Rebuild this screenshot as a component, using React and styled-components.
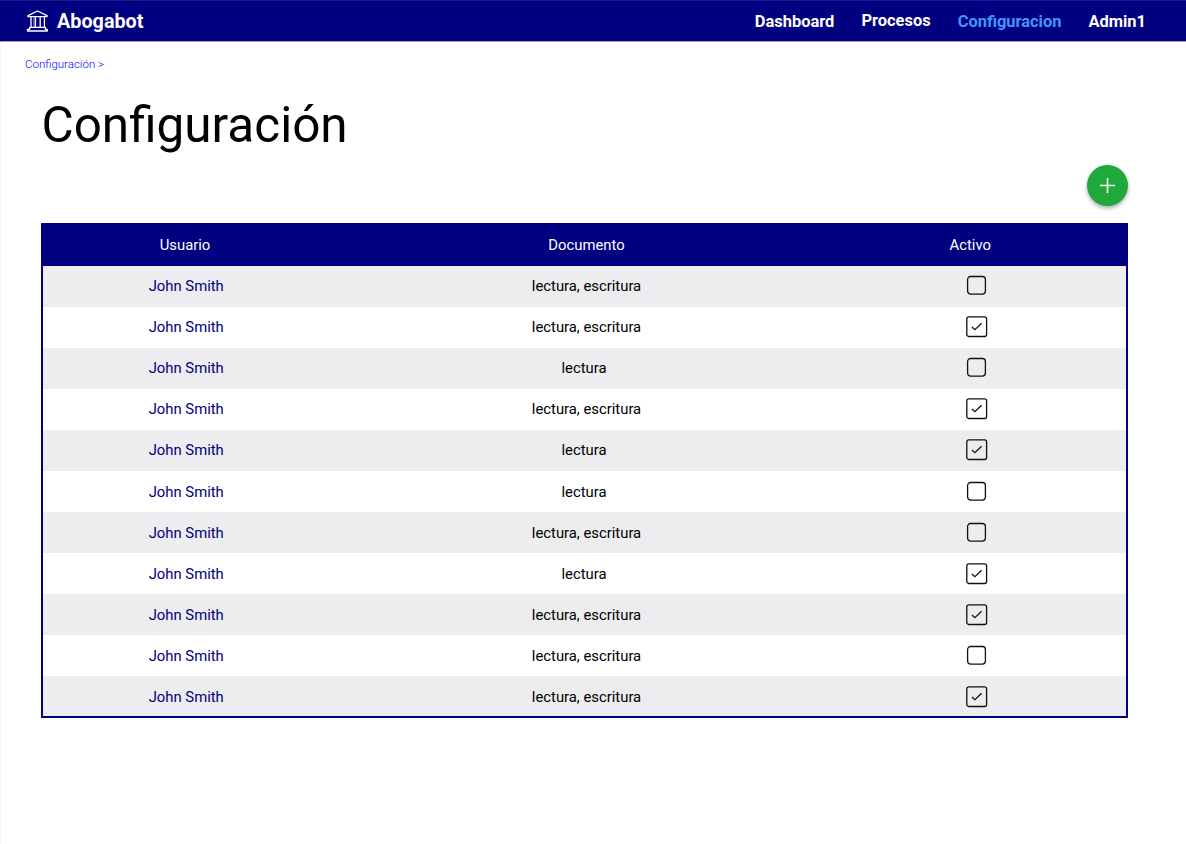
import React from "react";
import styled, { createGlobalStyle } from "styled-components";

const GlobalStyle = createGlobalStyle`
  *, *::before, *::after { box-sizing: border-box; }
  body { margin: 0; background: #fff; font-family: Roboto, "Liberation Sans", sans-serif; color: #000; }
`;

const Page = styled.div`
  min-height: 844px;
  border-left: 1px solid #f6f6f6;
`;

const Header = styled.header`
  display: flex;
  justify-content: space-between;
  height: 42px;
  margin-left: -1px;
  padding: 0 40px 0 26px;
  background: #000080;
  border-top: 1px solid #1a1a8c;
  border-bottom: 1px solid #a0a0d0;
  color: #fff;
`;

const Brand = styled.div`
  display: flex;
  align-items: center;
  gap: 8px;
  font-size: 19.8px;
  font-weight: 700;
`;

const Nav = styled.nav`
  display: flex;
  align-items: center;
  gap: 27px;
`;

const NavLink = styled.a`
  font-size: 16.45px;
  font-weight: 700;
  line-height: 20px;
  color: ${(p) => (p.$active ? "#4096ff" : "#fff")};
  padding: ${(p) => (p.$raised ? "0 0 1px" : "1px 0 0")};
`;

const Breadcrumb = styled.div`
  padding: 15px 0 0 24px;
  font-size: 11.5px;
  font-weight: 300;
  line-height: 14px;
  color: #0000ff;
`;

const Title = styled.h1`
  margin: 25px 0 0 40.5px;
  font-size: 49.44px;
  font-weight: 400;
  line-height: 58px;
`;

const Actions = styled.div`
  display: flex;
  justify-content: flex-end;
  width: 1087px;
  margin: 11px 0 17px 40px;
`;

const AddButton = styled.button`
  display: grid;
  place-items: center;
  width: 41px;
  height: 41px;
  padding: 0;
  border: 0;
  border-radius: 50%;
  background: #1fa83c;
  box-shadow: 0 2px 4px rgba(0, 0, 0, 0.35);
`;

const Table = styled.div`
  width: 1087px;
  margin-left: 40px;
  border: 2px solid #000080;
  border-top: 0;
`;

const Row = styled.div`
  display: grid;
  grid-template-columns: 286.5px 514px 1fr;
  align-items: center;
  height: 41.1px;
  font-size: 14.83px;
  background: ${(p) => (p.$striped ? "#ededef" : "#fff")};

  &:last-child {
    height: 40px;
    padding-top: 1.5px;
  }
`;

const HeadRow = styled(Row)`
  height: 42.5px;
  padding-top: 1px;
  background: #000080;
  color: #fff;
`;

const Cell = styled.div`
  text-align: center;
  padding-right: ${(p) => p.$shift || 0}px;
`;

const UserCell = styled(Cell)`
  color: #000080;
`;

const CheckCell = styled(Cell)`
  display: flex;
  padding-left: 122.5px;
`;

const users = [
  ["lectura, escritura", false],
  ["lectura, escritura", true],
  ["lectura", false],
  ["lectura, escritura", true],
  ["lectura", true],
  ["lectura", false],
  ["lectura, escritura", false],
  ["lectura", true],
  ["lectura, escritura", true],
  ["lectura, escritura", false],
  ["lectura, escritura", true],
];

function CourtIcon() {
  return (
    <svg width="23" height="23" viewBox="0 0 23 23" fill="none" stroke="#fff" strokeWidth="1.3" strokeLinejoin="round">
      <path d="M2 5.6 11.5 1 21 5.6V6.6H2z" />
      <path d="M5 7v10.2M9.4 7v10.2M14.2 7v10.2M18.4 7v10.2M3.6 17.4h15.8v2h1.9v1.6H1.5v-1.6h2.1z" />
      <path d="M7.9 8v9" strokeWidth="0.8" opacity="0.7" />
    </svg>
  );
}

function Checkbox({ checked }) {
  return (
    <svg width="22" height="22" viewBox="0 0 22 22" fill="none" stroke="#111" strokeWidth="1.3">
      {checked ? (
        <>
          <rect x="0.8" y="0.9" width="19.8" height="19.6" rx="2" />
          <path d="M5.9 10.9 8.9 13.7 15.6 7.3" />
        </>
      ) : (
        <rect x="1.6" y="1.5" width="17.8" height="17.6" rx="3" />
      )}
    </svg>
  );
}

export default function App() {
  return (
    <Page>
      <GlobalStyle />
      <Header>
        <Brand>
          <CourtIcon />
          Abogabot
        </Brand>
        <Nav>
          <NavLink>Dashboard</NavLink>
          <NavLink $raised>Procesos</NavLink>
          <NavLink $active>Configuracion</NavLink>
          <NavLink>Admin1</NavLink>
        </Nav>
      </Header>
      <Breadcrumb>Configuración &gt;</Breadcrumb>
      <Title>Configuración</Title>
      <Actions>
        <AddButton aria-label="Agregar">
          <svg width="17" height="17" viewBox="0 0 17 17" stroke="#fff" strokeWidth="1.6">
            <path d="M8.5 1v15M1 8.5h15" />
          </svg>
        </AddButton>
      </Actions>
      <Table>
        <HeadRow>
          <Cell $shift={2.5}>Usuario</Cell>
          <Cell>Documento</Cell>
          <Cell $shift={29}>Activo</Cell>
        </HeadRow>
        {users.map(([doc, active], i) => (
          <Row key={i} $striped={i % 2 === 0}>
            <UserCell>John Smith</UserCell>
            <Cell $shift={doc === "lectura" ? 5 : 0}>{doc}</Cell>
            <CheckCell>
              <Checkbox checked={active} />
            </CheckCell>
          </Row>
        ))}
      </Table>
    </Page>
  );
}
